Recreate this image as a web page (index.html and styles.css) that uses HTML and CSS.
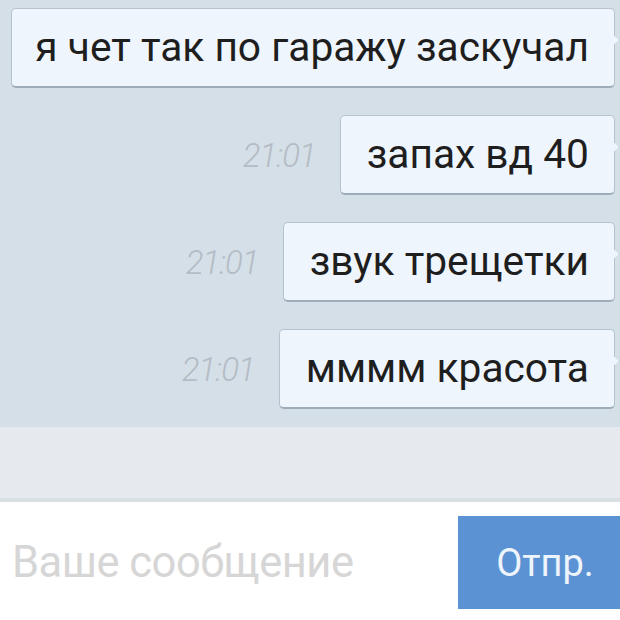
FILE: index.html
```html
<!DOCTYPE html>
<html lang="ru">
<head>
<meta charset="utf-8">
<link rel="stylesheet" href="styles.css">
</head>
<body>
<div class="screen">
  <div class="chat">
    <div class="row">
      <div class="bubble">я чет так по гаражу заскучал</div>
    </div>
    <div class="row">
      <span class="time">21:01</span>
      <div class="bubble">запах вд 40</div>
    </div>
    <div class="row">
      <span class="time">21:01</span>
      <div class="bubble">звук трещетки</div>
    </div>
    <div class="row">
      <span class="time">21:01</span>
      <div class="bubble">мммм красота</div>
    </div>
  </div>
  <div class="band"></div>
  <div class="composer">
    <div class="input">Ваше сообщение</div>
    <div class="send">Отпр.</div>
  </div>
</div>
</body>
</html>
```
FILE: styles.css
```css
html, body {
  margin: 0;
  padding: 0;
}
body {
  width: 620px;
  height: 620px;
  overflow: hidden;
  font-family: Roboto, "Noto Sans", sans-serif;
}
.screen {
  display: flex;
  flex-direction: column;
  height: 620px;
}
.chat {
  background: #d5dfe8;
  height: 427px;
  box-sizing: border-box;
  padding: 8px 5px 0 13px;
  display: flex;
  flex-direction: column;
  gap: 27px;
}
.row {
  display: flex;
  justify-content: flex-end;
  align-items: center;
  gap: 24px;
}
.bubble {
  position: relative;
  height: 80px;
  box-sizing: border-box;
  padding: 0 25px 2px 26px;
  display: flex;
  align-items: center;
  background: #eef5fc;
  border: 1px solid #b6c2ce;
  border-bottom: 2px solid #9eabb8;
  border-radius: 5px;
  font-size: 40.7px;
  color: #1e1e1e;
  white-space: nowrap;
}
.row:first-child .bubble {
  flex: 1;
  padding-left: 23px;
}
.bubble::after {
  content: "";
  position: absolute;
  right: -5px;
  top: 24px;
  width: 7px;
  height: 14px;
  background: #eef5fc;
  border-right: 1px solid #b6c2ce;
  clip-path: polygon(0 0, 100% 50%, 0 100%);
}
.time {
  font-size: 33px;
  font-style: italic;
  font-weight: 300;
  color: #b4bcc5;
  letter-spacing: -1px;
}
.band {
  height: 71px;
  background: #e6eaee;
  border-bottom: 4px solid #dadfe4;
}
.composer {
  flex: 1;
  background: #fff;
  display: flex;
  align-items: flex-start;
  padding: 14px 0 0 12px;
}
.input {
  flex: 1;
  height: 93px;
  display: flex;
  align-items: center;
  font-size: 43.5px;
  color: #d6d6d6;
  letter-spacing: -0.5px;
}
.send {
  width: 162px;
  height: 93px;
  background: #5b92d3;
  color: #eef4fb;
  font-size: 38px;
  display: flex;
  align-items: center;
  justify-content: center;
  box-sizing: border-box;
  padding-left: 12px;
}
```
